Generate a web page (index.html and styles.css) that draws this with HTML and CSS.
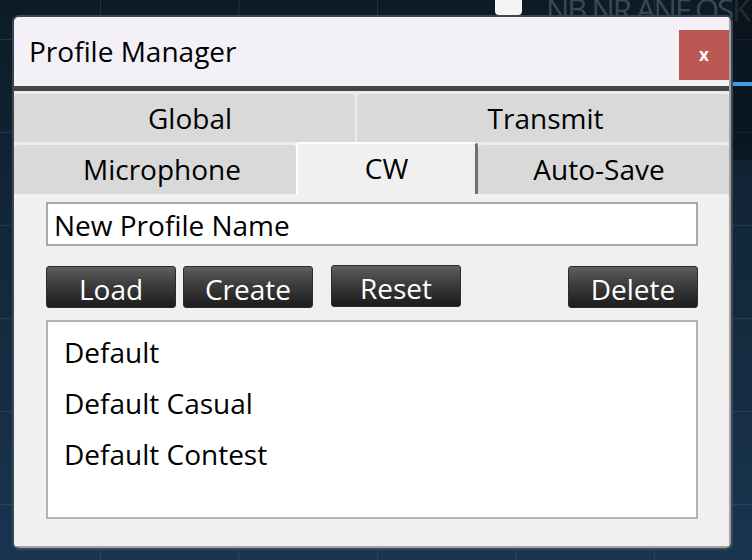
FILE: index.html
```html
<!DOCTYPE html>
<html>
<head>
  <meta name="viewport" content="width=device-width">
  <title>Profile Manager</title>
  <link rel="stylesheet" href="styles.css">
</head>
<body>
<div class="desktop">
  <div class="indicator"></div>
  <div class="mode-text">NB NR ANF QSK</div>
  <div class="side-panel"></div>
  <div class="side-line"></div>

  <div class="window">
    <div class="frame">
      <div class="titlebar">
        <span class="title">Profile Manager</span>
        <button class="close">x</button>
      </div>
      <div class="strip"></div>

      <div class="tabs">
        <div class="tab-row upper">
          <div class="tab global">Global</div>
          <div class="tab transmit">Transmit</div>
        </div>
        <div class="tab-row lower">
          <div class="tab mic">Microphone</div>
          <div class="tab active">CW</div>
          <div class="tab autosave">Auto-Save</div>
        </div>
      </div>

      <div class="panel">
        <input class="name-input" type="text" value="New Profile Name">
        <div class="actions">
          <button class="btn">Load</button>
          <button class="btn create">Create</button>
          <button class="btn reset">Reset</button>
          <button class="btn delete">Delete</button>
        </div>
        <ul class="profile-list">
          <li>Default</li>
          <li>Default Casual</li>
          <li>Default Contest</li>
        </ul>
      </div>
    </div>
  </div>
</div>
</body>
</html>
```

FILE: styles.css
```css
body {
  margin: 0;
  padding: 0;
  font-family: "Open Sans", "Noto Sans", sans-serif;
  overflow: hidden;
}
.desktop {
  position: relative;
  width: 752px;
  height: 560px;
  overflow: hidden;
  background-color: #12263a;
  background-image:
    linear-gradient(90deg, rgba(120, 160, 200, 0.16) 1px, transparent 1px),
    linear-gradient(180deg, rgba(120, 160, 200, 0.16) 1px, transparent 1px),
    linear-gradient(180deg, #0d1b27 0%, #112536 35%, #193550 100%);
  background-size: 138.5px 100%, 100% 93px, 100% 100%;
  background-position: 100px 0, 0 39px, 0 0;
}

/* bits of the radio app behind the dialog */
.indicator {
  position: absolute;
  left: 495px;
  top: -6px;
  width: 27px;
  height: 21px;
  background: #f4f4f4;
  border-radius: 4px;
}
.mode-text {
  position: absolute;
  left: 546px;
  top: -12px;
  font-size: 31px;
  letter-spacing: -2px;
  color: #3a4755;
  white-space: nowrap;
}
.side-panel {
  position: absolute;
  left: 733px;
  top: 0;
  width: 19px;
  height: 160px;
  background: rgba(5, 10, 16, 0.45);
}
.side-line {
  position: absolute;
  left: 733px;
  top: 82px;
  width: 19px;
  height: 4px;
  background: #3d9ee6;
}

/* dialog */
.window {
  position: relative;
  margin: 15px 0 0 12px;
  width: 721px;
  height: 535px;
  box-sizing: border-box;
  border: 2px solid #3b4653;
  border-radius: 7px;
  overflow: hidden;
}
.frame {
  height: 100%;
  box-sizing: border-box;
  border-right: 2px solid #a3a3a3;
  border-bottom: 2px solid #a3a3a3;
  border-radius: 0 0 5px 0;
  display: flex;
  flex-direction: column;
  background: #f0f0f0;
}
.titlebar {
  height: 69px;
  flex-shrink: 0;
  display: flex;
  justify-content: space-between;
  align-items: flex-start;
  background: #f3f0f7;
}
.title {
  padding-left: 15px;
  font-size: 28px;
  line-height: 69px;
  color: #000;
}
.close {
  width: 50px;
  height: 50px;
  margin-top: 13px;
  border: none;
  background: #bb5854;
  color: #fff;
  font-family: "Open Sans", sans-serif;
  font-size: 17px;
  font-weight: 700;
  line-height: 1;
  padding: 0 0 1px 0;
}
.strip {
  height: 5px;
  flex-shrink: 0;
  background: #464646;
}

/* tabs */
.tabs {
  flex-shrink: 0;
  padding-top: 3px;
  background: #ececec;
}
.tab-row {
  display: flex;
}
.tab-row.upper {
  height: 48px;
  gap: 2px;
}
.tab-row.lower {
  height: 52px;
  align-items: flex-end;
}
.tab {
  box-sizing: border-box;
  background: #d9d9d9;
  border-radius: 4px 4px 0 0;
  text-align: center;
  font-size: 28px;
  color: #000;
}
.upper .tab {
  height: 48px;
  line-height: 48px;
}
.lower .tab {
  height: 49px;
  line-height: 49px;
}
.global {
  width: 341px;
  padding-left: 11px;
}
.transmit {
  flex: 1;
  padding-left: 5px;
}
.mic {
  width: 282px;
  padding-left: 14px;
}
.lower .tab.active {
  width: 182px;
  height: 52px;
  line-height: 47px;
  padding-top: 1px;
  background: #f0f0f0;
  border-top: 2px solid #fff;
  border-left: 2px solid #fff;
  border-right: 3px solid #6f6f6f;
}
.autosave {
  flex: 1;
  padding-right: 9px;
}

/* tab page */
.panel {
  flex: 1;
  padding: 8px 31px 0 32px;
  background: #f0f0f0;
}
.name-input {
  display: block;
  width: 100%;
  height: 44px;
  box-sizing: border-box;
  margin: 0;
  padding: 1px 6px 0 6px;
  border: 2px solid #a9a9a9;
  background: #fff;
  font-family: "Open Sans", sans-serif;
  font-size: 28px;
  color: #000;
  outline: none;
}
.actions {
  display: flex;
  align-items: flex-start;
  height: 42px;
  margin-top: 20px;
}
.btn {
  width: 130px;
  height: 42px;
  box-sizing: border-box;
  margin: 0;
  padding: 3px 0 0 0;
  border: 1px solid #2c2c2c;
  border-radius: 3px;
  background: linear-gradient(180deg, #5e5e5e 0%, #3c3c3c 45%, #1c1c1c 100%);
  color: #fff;
  font-family: "Open Sans", sans-serif;
  font-size: 28px;
  line-height: 36px;
}
.create {
  margin-left: 7px;
}
.reset {
  margin-left: 18px;
  margin-top: -1px;
}
.delete {
  margin-left: auto;
}
.profile-list {
  list-style: none;
  height: 199px;
  box-sizing: border-box;
  margin: 12px 0 0 0;
  padding: 5px 0 0 16px;
  border: 2px solid #b1b1b9;
  background: #fff;
}
.profile-list li {
  font-size: 28px;
  line-height: 51px;
  color: #000;
}
```
